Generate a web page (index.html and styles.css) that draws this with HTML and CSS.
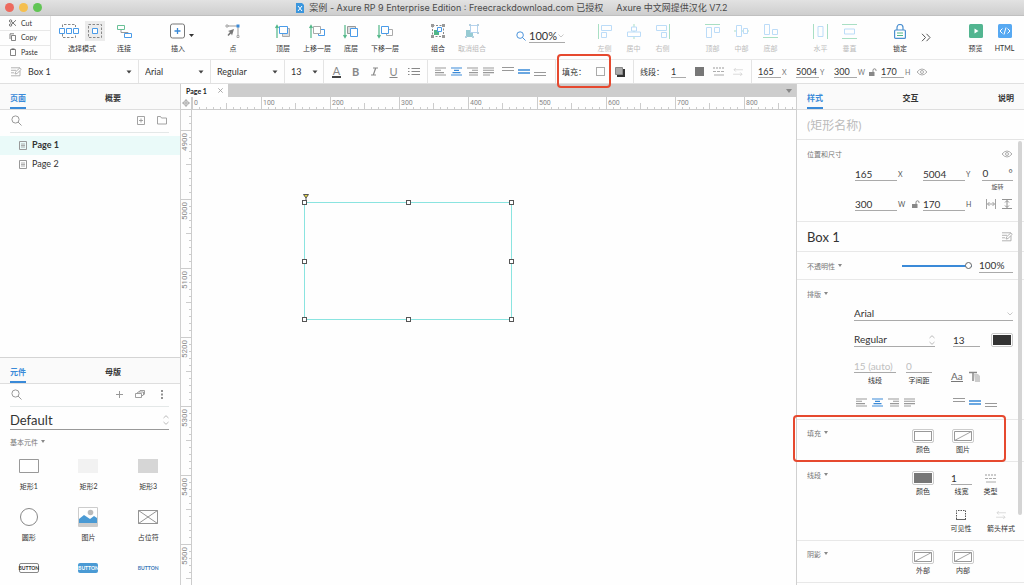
FILE: index.html
```html
<!DOCTYPE html>
<html lang="zh-CN">
<head>
<meta charset="utf-8">
<title>案例 - Axure RP 9</title>
<link rel="stylesheet" href="styles.css">
</head>
<body>
<svg class="defs" aria-hidden="true">
  <symbol id="caret" viewBox="0 0 6 4"><path d="M.5.5h5L3 3.500z" fill="#444"/></symbol>
  <symbol id="chev" viewBox="0 0 6 4"><path d="M.5.5 3 3 5.5.5" fill="none" stroke="#bbb" stroke-width=".8"/></symbol>
  <symbol id="updown" viewBox="0 0 6 10"><path d="M.5 3 3 .7 5.5 3M.5 7 3 9.300 5.500 7" fill="none" stroke="#aaa" stroke-width=".8"/></symbol>
  <symbol id="note" viewBox="0 0 12 10"><path d="M1 .8h9M1 3.300h5M1 5.800h3M1 8.800h9M5 7l.6-2.200L9.800 1l1.400 1.400L7 6.500zM10 4v4.800" fill="none" stroke="#aaa" stroke-width=".9"/></symbol>
  <symbol id="search" viewBox="0 0 11 11"><circle cx="4.500" cy="4.500" r="3.600" fill="none" stroke="currentColor"/><path d="m7 7 3.500 3.500" stroke="currentColor"/></symbol>
  <symbol id="eye" viewBox="0 0 12 8"><path d="M1 4q5-6 10 0-5 6-10 0z" fill="none" stroke="#999" stroke-width=".8"/><circle cx="6" cy="4" r="1.500" fill="none" stroke="#999" stroke-width=".8"/></symbol>
  <symbol id="unlock" viewBox="0 0 8 8"><path d="M0 4h5.500v4H0z" fill="#888"/><path d="M4 4V2.300a1.500 1.500 0 0 1 3 0V3" fill="none" stroke="#888"/></symbol>
  <symbol id="al" viewBox="0 0 11 9"><path d="M0 1h11M0 3.300h6M0 5.600h9M0 8h11" stroke="#999" stroke-width="1.100"/></symbol>
  <symbol id="ac" viewBox="0 0 11 9"><path d="M0 1h11M3 3.300h5M1.500 5.600h8M0 8h11" stroke="#3a8ad8" stroke-width="1.200"/></symbol>
  <symbol id="ar" viewBox="0 0 11 9"><path d="M0 1h11M5 3.300h6M2 5.600h9M2 8h9" stroke="#999" stroke-width="1.100"/></symbol>
  <symbol id="aj" viewBox="0 0 11 9"><path d="M0 1h11M0 3.300h11M0 5.600h11M0 8h7" stroke="#999" stroke-width="1.100"/></symbol>
  <symbol id="vt" viewBox="0 0 12 11"><path d="M0 1.500h12M0 4.500h12" stroke="#999" stroke-width="1.200"/></symbol>
  <symbol id="vm" viewBox="0 0 12 11"><path d="M0 4h12M0 7h12" stroke="#3a8ad8" stroke-width="1.400"/></symbol>
  <symbol id="vb" viewBox="0 0 12 11"><path d="M0 6.500h12M0 9.500h12" stroke="#999" stroke-width="1.200"/></symbol>
  <symbol id="dash" viewBox="0 0 11 9"><path d="M0 1h11" stroke="#999" stroke-dasharray="2 1"/><path d="M0 4.500h11" stroke="#999" stroke-dasharray="3 1" stroke-width=".8"/><path d="M1 8h10" stroke="#aaa"/></symbol>
  <symbol id="arrows" viewBox="0 0 11 9"><path d="M11 2H1M3 0 1 2l2 2M0 7h10M8 5l2 2-2 2" fill="none" stroke="#ccc" stroke-width=".8"/></symbol>
  <symbol id="pageicon" viewBox="0 0 8 9"><path d="M.5.5h7v8h-7z" fill="none" stroke="#999"/><path d="M2 3h4M2 4.500h4M2 6h4" stroke="#999" stroke-width=".8"/></symbol>
  <symbol id="nofill" viewBox="0 0 20 12"><path d="M1.500 1.500h17v9h-17z" fill="#fff" stroke="#999"/><path d="m1.500 10.500 17-9" stroke="#999" stroke-width=".9"/></symbol>
</svg>

<header class="titlebar">
  <span class="light light-red"></span><span class="light light-yellow"></span><span class="light light-green"></span>
  <div class="title">
    <svg width="8" height="10" viewBox="0 0 8 10"><path d="M0 0h6l2 2v8H0z" fill="#3b96dd"/><path d="m2 3 4 5M6 3 2 8" stroke="#fff"/></svg>
    <span>案例 - Axure RP 9 Enterprise Edition : Freecrackdownload.com 已授权</span>
    <span class="title-extra">Axure 中文网提供汉化 V7.2</span>
  </div>
</header>

<div class="toolbar">
  <div class="clipboard">
    <button><svg width="8" height="8" viewBox="0 0 8 8"><g fill="none" stroke="#555" stroke-width=".8"><circle cx="1.600" cy="2" r="1.200"/><circle cx="1.600" cy="6" r="1.200"/><path d="M2.500 2.700 7 6.800M2.500 5.300 7 1.200"/></g></svg>Cut</button>
    <button><svg width="8" height="8" viewBox="0 0 8 8"><path d="M2.500 2.500h4v5h-4zM1 6V.8h4" fill="none" stroke="#666" stroke-width=".8"/></svg>Copy</button>
    <button><svg width="8" height="8" viewBox="0 0 8 8"><path d="M1.500 1.500h5v6h-5z" fill="none" stroke="#666" stroke-width=".8"/><path d="M2.500 1.200h3" stroke="#666" stroke-width="1.500"/></svg>Paste</button>
  </div>
  <button class="tool tool-select"><span class="tool-icon">
    <svg width="20" height="16" viewBox="0 0 20 16"><path d="M3.500 4V1.500h13V4M3.500 11v3.500h13V11" fill="none" stroke="#888" stroke-dasharray="2.500 1.500"/><path d="M.5 5.500h5v5h-5zM7.500 5.500h5v5h-5zM14.500 5.500h5v5h-5z" fill="#fff" stroke="#4a9be8"/></svg>
    <span class="pressed"><svg width="16" height="16" viewBox="0 0 16 16"><path d="M1.500 1.500h13v13h-13z" fill="none" stroke="#888" stroke-dasharray="2.500 1.500"/><path d="M5.500 5.500h5v5h-5z" fill="#fff" stroke="#4a9be8"/></svg></span></span>选择模式</button>
  <button class="tool tool-connect"><span class="tool-icon"><svg width="15" height="15" viewBox="0 0 15 15"><path d="M.5 1.500h7v4h-7z" fill="none" stroke="#68c096"/><path d="M4 6v2.500h7V9" fill="none" stroke="#999"/><path d="M7.500 9.500h7v4h-7z" fill="#fff" stroke="#4a9be8"/></svg></span>连接</button>
  <button class="tool tool-insert"><span class="tool-icon"><svg width="32" height="16" viewBox="0 0 32 16"><rect x="8.500" y="1" width="14" height="14" rx="2" fill="#fff" stroke="#777"/><path d="M15.500 5v6M12.500 8h6" stroke="#3a8ad8" stroke-width="1.300"/><path d="M27 11h5l-2.500 3z" fill="#333"/></svg></span>插入</button>
  <button class="tool tool-point"><span class="tool-icon"><svg width="16" height="16" viewBox="0 0 16 16"><path d="M3 3h10v9" fill="none" stroke="#999"/><path d="M1 2h2v2H1zM12 12.500h2v2h-2z" fill="#fff" stroke="#888" stroke-width=".7"/><path d="M11.500 1.500h3v3h-3z" fill="#3a8ad8"/><path d="m9 6-6 2 2 1-2.500 3 1 1L6 10.500l1 2z" fill="#777"/></svg></span>点</button>
  <div class="tools tools-order">
    <button class="tool"><span class="tool-icon"><svg width="16" height="15" viewBox="0 0 16 15"><path d="M2 14V2M.5 4 2 1.500 3.500 4" fill="none" stroke="#52b788" stroke-width="1.200"/><path d="M7.500 4.500h7v8h-7z" fill="#ddd" stroke="#aaa"/><path d="M4.500 2.500h8v7h-8z" fill="#fff" stroke="#4a9be8"/></svg></span>顶层</button>
    <button class="tool"><span class="tool-icon"><svg width="16" height="15" viewBox="0 0 16 15"><path d="M2 14V2M.5 4 2 1.500 3.500 4" fill="none" stroke="#52b788" stroke-width="1.200"/><path d="M9.500 5.500h6v6h-6z" fill="#fff" stroke="#4a9be8"/><path d="M4.500 2.500h7v7h-7z" fill="#fff" stroke="#aaa"/></svg></span>上移一层</button>
    <button class="tool"><span class="tool-icon"><svg width="16" height="15" viewBox="0 0 16 15"><path d="M2 1v12M.5 11 2 13.500 3.500 11" fill="none" stroke="#52b788" stroke-width="1.200"/><path d="M4.500 2.500h8v7h-8z" fill="#ddd" stroke="#999"/><path d="M7.500 4.500h7v8h-7z" fill="#fff" stroke="#4a9be8"/></svg></span>底层</button>
    <button class="tool"><span class="tool-icon"><svg width="16" height="15" viewBox="0 0 16 15"><path d="M2 1v12M.5 11 2 13.500 3.500 11" fill="none" stroke="#52b788" stroke-width="1.200"/><path d="M9.500 5.500h6v6h-6z" fill="#fff" stroke="#aaa"/><path d="M4.500 2.500h7v7h-7z" fill="#fff" stroke="#4a9be8"/></svg></span>下移一层</button>
  </div>
  <div class="tools tools-group">
    <button class="tool"><span class="tool-icon"><svg width="14" height="14" viewBox="0 0 14 14"><path d="M1.500 1.500h11v11h-11z" fill="none" stroke="#888" stroke-dasharray="2 1.500"/><path d="M0 0h3v3H0zM11 0h3v3h-3zM0 11h3v3H0zM11 11h3v3h-3z" fill="#999"/><path d="M3 6h5v5H3z" fill="#52b788"/><path d="M6.500 3.500h4v4h-4z" fill="#fff" stroke="#4a9be8"/></svg></span>组合</button>
    <button class="tool" disabled><span class="tool-icon"><svg width="14" height="14" viewBox="0 0 14 14"><path d="M1 6h7v7H1z" fill="#97cbd3"/><path d="M5.500 1.500h7v7h-7z" fill="#fff" stroke="#b5d3ef"/><path d="M4 0h2v2H4zM12 0h2v2h-2zM12 8h2v2h-2zM0 12h2v2H0zM7 12h2v2H7z" fill="#b5d0e0"/></svg></span>取消组合</button>
  </div>
  <label class="zoom"><svg width="10" height="10"><use href="#search"/></svg><input value="100%" aria-label="缩放"><svg width="6" height="4"><use href="#chev"/></svg></label>
  <div class="tools tools-narrow tools-align">
    <button class="tool" disabled><span class="tool-icon"><svg width="14" height="15" viewBox="0 0 14 15"><path d="M.5 0v15" stroke="#a9dfc4"/><path d="M3.500 1.500h10v5h-10zM3.500 8.500h5v5h-5z" fill="none" stroke="#bcdcf8"/></svg></span>左侧</button>
    <button class="tool" disabled><span class="tool-icon"><svg width="14" height="15" viewBox="0 0 14 15"><path d="M7 0v15" stroke="#a9dfc4"/><path d="M4.500 3h5v4h-5zM.5 8h13v4.500H.5z" fill="#fff" stroke="#bcdcf8"/></svg></span>居中</button>
    <button class="tool" disabled><span class="tool-icon"><svg width="14" height="15" viewBox="0 0 14 15"><path d="M13.500 0v15" stroke="#a9dfc4"/><path d="M.5 1.500h10v5H.5zM5.500 8.500h5v5h-5z" fill="none" stroke="#bcdcf8"/></svg></span>右侧</button>
  </div>
  <div class="tools tools-narrow">
    <button class="tool" disabled><span class="tool-icon"><svg width="15" height="14" viewBox="0 0 15 14"><path d="M0 .5h15" stroke="#a9dfc4"/><path d="M1.500 3.500h5v10h-5zM9.500 3.500h5v5h-5z" fill="none" stroke="#bcdcf8"/></svg></span>顶部</button>
    <button class="tool" disabled><span class="tool-icon"><svg width="15" height="14" viewBox="0 0 15 14"><path d="M0 7h15" stroke="#a9dfc4"/><path d="M2.500 1.500h5v11h-5zM9.500 4.500h4v5h-4z" fill="#fff" stroke="#bcdcf8"/></svg></span>中部</button>
    <button class="tool" disabled><span class="tool-icon"><svg width="15" height="14" viewBox="0 0 15 14"><path d="M0 13.500h15" stroke="#a9dfc4"/><path d="M1.500.5h5v10h-5zM9.500 5.500h5v5h-5z" fill="none" stroke="#bcdcf8"/></svg></span>底部</button>
  </div>
  <div class="tools tools-narrow">
    <button class="tool" disabled><span class="tool-icon"><svg width="15" height="15" viewBox="0 0 15 15"><path d="M.5 0v15M14.500 0v15" stroke="#a9dfc4"/><path d="M5 2.500h5v10H5z" fill="none" stroke="#bcdcf8"/></svg></span>水平</button>
    <button class="tool" disabled><span class="tool-icon"><svg width="15" height="15" viewBox="0 0 15 15"><path d="M0 .5h15M0 14.500h15" stroke="#a9dfc4"/><path d="M2.500 5h10v5h-10z" fill="none" stroke="#bcdcf8"/></svg></span>垂直</button>
  </div>
  <button class="tool tool-lock"><span class="tool-icon"><svg width="12" height="15" viewBox="0 0 12 15"><path d="M3 6V3.500a3 3 0 0 1 6 0V6" fill="none" stroke="#4a8fd0" stroke-width="1.200"/><rect x=".6" y="6" width="10.800" height="8.400" rx="1" fill="#fff" stroke="#4a8fd0" stroke-width="1.200"/><path d="M3 9h6M3 11.500h6" stroke="#52b788" stroke-width="1.200"/></svg></span>锁定</button>
  <button class="more" aria-label="更多"><svg width="10" height="9" viewBox="0 0 10 9"><path d="m1 .8 3.500 3.700L1 8.200M5.500.8 9 4.500 5.500 8.200" fill="none" stroke="#555"/></svg></button>
  <div class="tools tools-narrow tools-preview">
    <button class="tool"><span class="tool-icon"><svg width="14" height="14" viewBox="0 0 14 14"><rect width="14" height="14" rx="1.500" fill="#52b590"/><path d="M5.500 4.500 9.500 7l-4 2.500z" fill="#fff"/></svg></span>预览</button>
    <button class="tool"><span class="tool-icon"><svg width="14" height="14" viewBox="0 0 14 14"><rect width="14" height="14" rx="1.500" fill="#57a9f2"/><path d="M4.500 4.500 2 7l2.500 2.500M9.500 4.500 12 7 9.500 9.500M8 3.500l-2 7" fill="none" stroke="#fff"/></svg></span>HTML</button>
  </div>
</div>

<div class="formatbar">
  <div class="fgroup pick pick-style"><svg width="12" height="10"><use href="#note"/></svg><select aria-label="样式"><option>Box 1</option></select><svg class="caret" width="6" height="4"><use href="#caret"/></svg></div>
  <div class="fgroup pick pick-font"><select aria-label="字体"><option>Arial</option></select><svg class="caret" width="6" height="4"><use href="#caret"/></svg></div>
  <div class="fgroup pick pick-weight"><select aria-label="字型"><option>Regular</option></select><svg class="caret" width="6" height="4"><use href="#caret"/></svg></div>
  <div class="fgroup pick pick-size"><select aria-label="字号"><option>13</option></select><svg class="caret" width="6" height="4"><use href="#caret"/></svg></div>
  <div class="fgroup text-tools">
    <button class="glyph glyph-color" aria-label="文字颜色">A</button><button class="glyph glyph-bold" aria-label="粗体">B</button><button class="glyph" aria-label="斜体"><svg width="9" height="9" viewBox="0 0 9 9"><path d="M3 1h5M1 8h5M5.700 1 3.300 8" fill="none" stroke="#888" stroke-width="1.200"/></svg></button><button class="glyph glyph-under" aria-label="下划线">U</button>
    <button aria-label="列表"><svg width="12" height="9" viewBox="0 0 12 9"><path d="M0 1.500h1.500M0 4.500h1.500M0 7.500h1.500M3.500 1.500H12M3.500 4.500H12M3.500 7.500H12" stroke="#888"/></svg></button>
  </div>
  <div class="fgroup align-tools">
    <button aria-label="左对齐"><svg width="11" height="9"><use href="#al"/></svg></button><button aria-label="居中对齐"><svg width="11" height="9"><use href="#ac"/></svg></button><button aria-label="右对齐"><svg width="11" height="9"><use href="#ar"/></svg></button><button aria-label="两端对齐"><svg width="11" height="9"><use href="#aj"/></svg></button>
    <span class="valign"><button aria-label="顶端"><svg width="12" height="11"><use href="#vt"/></svg></button><button aria-label="中间"><svg width="12" height="11"><use href="#vm"/></svg></button><button aria-label="底端"><svg width="12" height="11"><use href="#vb"/></svg></button></span>
  </div>
  <div class="fgroup fill-tools">
    <span class="flabel">填充：</span><button class="chip chip-empty" aria-label="填充颜色"></button><button class="shadow-btn" aria-label="阴影"><svg width="10" height="10" viewBox="0 0 10 10"><path d="M2 2h8v8H2z" fill="#333"/><path d="M.5.5h7v7h-7z" fill="#aaa" stroke="#888"/></svg></button>
    <span class="mark mark-bar"></span>
  </div>
  <div class="fgroup line-tools">
    <span class="flabel">线段：</span><input class="line-width" value="1" aria-label="线宽"><button class="chip chip-grey" aria-label="线段颜色"></button><button aria-label="线段类型"><svg width="11" height="9"><use href="#dash"/></svg></button><button aria-label="箭头样式"><svg width="10" height="8"><use href="#arrows"/></svg></button>
  </div>
  <div class="fgroup geometry">
    <label><input value="165">X</label><label><input value="5004">Y</label><label><input value="300">W</label><svg width="8" height="8"><use href="#unlock"/></svg><label><input value="170">H</label><svg width="12" height="8"><use href="#eye"/></svg>
  </div>
</div>

<main class="workspace">
  <aside class="left">
    <section class="panel">
      <nav class="tabs"><a class="active" href="#pages">页面</a><a href="#outline">概要</a></nav>
      <div class="searchbar"><svg width="11" height="11"><use href="#search"/></svg><input type="search" aria-label="搜索页面">
        <button aria-label="添加页面"><svg width="8" height="9" viewBox="0 0 8 9"><path d="M.5.5h7v8h-7zM4 2.500v4M2 4.500h4" fill="none" stroke="#999" stroke-width=".9"/></svg></button>
        <button aria-label="添加文件夹"><svg width="10" height="9" viewBox="0 0 10 9"><path d="M.5.5h3l1 1.500h5v6h-9z" fill="none" stroke="#999" stroke-width=".9"/></svg></button></div>
      <ul class="pages" id="pages">
        <li class="current"><a href="#p1"><svg width="8" height="9"><use href="#pageicon"/></svg>Page 1</a></li>
        <li><a href="#p2"><svg width="8" height="9"><use href="#pageicon"/></svg>Page 2</a></li>
      </ul>
    </section>
    <section class="panel">
      <nav class="tabs"><a class="active" href="#widgets">元件</a><a href="#masters">母版</a></nav>
      <div class="searchbar"><svg width="11" height="11"><use href="#search"/></svg><input type="search" aria-label="搜索元件">
        <button aria-label="添加"><svg width="7" height="7" viewBox="0 0 7 7"><path d="M3.500 0v7M0 3.500h7" stroke="#999"/></svg></button>
        <button aria-label="元件库"><svg width="10" height="8" viewBox="0 0 10 8"><path d="M.5 3.500h6v4h-6zM2 3.500l1-1.500h5.500v3l-2 1M4 2l1-1.500h4.500V4l-1 1" fill="none" stroke="#888" stroke-width=".8"/></svg></button>
        <button aria-label="菜单"><svg width="10" height="9" viewBox="0 0 10 9"><path d="M5 0v2M5 3.500v2M5 7v2" stroke="#777" stroke-width="1.600"/></svg></button></div>
      <div class="library"><select aria-label="元件库"><option>Default</option></select><svg width="6" height="10"><use href="#updown"/></svg></div>
      <h3 class="group-title">基本元件 <i class="tri"></i></h3>
      <div class="widgets" id="widgets">
        <figure><svg width="20" height="20" viewBox="0 0 20 20"><path d="M.5 3.500h19v13H.5z" fill="#fff" stroke="#999"/></svg><figcaption>矩形1</figcaption></figure>
        <figure><svg width="20" height="20" viewBox="0 0 20 20"><path d="M0 3h20v14H0z" fill="#f2f2f2"/></svg><figcaption>矩形2</figcaption></figure>
        <figure><svg width="20" height="20" viewBox="0 0 20 20"><path d="M0 3h20v14H0z" fill="#d6d6d6"/></svg><figcaption>矩形3</figcaption></figure>
        <figure><svg width="20" height="20" viewBox="0 0 20 20"><circle cx="10" cy="10" r="8.500" fill="#fff" stroke="#888"/></svg><figcaption>圆形</figcaption></figure>
        <figure><svg width="20" height="20" viewBox="0 0 20 20"><path d="M.5.500h19v19H.5z" fill="#fff" stroke="#ccc"/><circle cx="12.500" cy="5.500" r="2.800" fill="#bbb"/><path d="m1 12 5-4 6 4 4-3 3 2v5H1z" fill="#4a9ad4"/><path d="M1 16h18v3H1z" fill="#ccc"/></svg><figcaption>图片</figcaption></figure>
        <figure><svg width="20" height="20" viewBox="0 0 20 20"><path d="M.5 3.500h19v13H.5zl19 13M19.500 3.500l-19 13" fill="none" stroke="#888" stroke-width=".9"/></svg><figcaption>占位符</figcaption></figure>
        <figure><span class="sample sample-line">BUTTON</span></figure>
        <figure><span class="sample sample-solid">BUTTON</span></figure>
        <figure><span class="sample sample-link">BUTTON</span></figure>
      </div>
    </section>
  </aside>

  <section class="center">
    <div class="doc-tabs"><a class="doc-tab" href="#p1">Page 1<svg width="5" height="5" viewBox="0 0 5 5"><path d="m.3.300 4.400 4.400M4.700.3.300 4.700" stroke="#999" stroke-width=".8"/></svg></a><svg class="tab-menu" width="6" height="4" viewBox="0 0 6 4"><path d="M0 0h6L3 4z" fill="#888"/></svg></div>
    <div class="ruler-corner"><svg width="8" height="8" viewBox="0 0 8 8"><path d="M4 0v8M0 4h8" stroke="#999" stroke-width=".8"/><circle cx="4" cy="4" r="2.400" fill="none" stroke="#999" stroke-width=".8"/></svg></div>
    <div class="ruler-x">
      <svg class="ticks" width="100%" height="12"><defs><pattern id="tx" width="69" height="12" patternUnits="userSpaceOnUse"><path d="M.5 0v12M34.500 6v6M7.500 10v2M14.500 10v2M21.500 10v2M28.500 10v2M41.500 10v2M48.500 10v2M55.500 10v2M62.500 10v2" stroke="#ccc"/></pattern></defs><rect width="100%" height="12" fill="url(#tx)"/></svg>
      <span>0</span><span>100</span><span>200</span><span>300</span><span>400</span><span>500</span><span>600</span><span>700</span><span>800</span>
    </div>
    <div class="ruler-y">
      <svg class="ticks" width="10" height="100%"><defs><pattern id="ty" y="20" width="10" height="69" patternUnits="userSpaceOnUse"><path d="M0 .5h10M5 34.500h5M8 7.500h2M8 14.500h2M8 21.500h2M8 28.500h2M8 41.500h2M8 48.500h2M8 55.500h2M8 62.500h2" stroke="#ccc"/></pattern></defs><rect width="10" height="100%" fill="url(#ty)"/></svg>
      <span>4900</span><span>5000</span><span>5100</span><span>5200</span><span>5300</span><span>5400</span><span>5500</span>
    </div>
    <div class="canvas">
      <div class="shape">
        <svg class="corner-grip" width="6" height="7" viewBox="0 0 6 7"><path d="M.5.500h5L3 4z" fill="#e8d83c" stroke="#555"/><path d="M3 4v3" stroke="#555"/></svg>
        <i class="handle nw"></i><i class="handle n"></i><i class="handle ne"></i><i class="handle w"></i><i class="handle e"></i><i class="handle sw"></i><i class="handle s"></i><i class="handle se"></i>
      </div>
    </div>
  </section>

  <aside class="right">
    <nav class="tabs tabs-spread"><a class="active" href="#style">样式</a><a href="#interact">交互</a><a href="#notes">说明</a></nav>
    <input class="name" placeholder="(矩形名称)" aria-label="矩形名称">
    <div class="props" id="style">
      <section class="prop">
        <div class="prop-head"><h3>位置和尺寸</h3><svg width="12" height="8"><use href="#eye"/></svg></div>
        <div class="position">
          <label><input value="165">X</label><label><input value="5004">Y</label>
          <label class="rotate"><span class="degree"><input value="0">°</span>旋转</label>
          <span class="size-lock"><label><input value="300">W</label><svg width="8" height="8"><use href="#unlock"/></svg></span><label><input value="170">H</label>
          <span class="fit"><svg width="10" height="10" viewBox="0 0 10 10"><path d="M.5 0v10M9.500 0v10M1.500 5h7M3.500 3l-2 2 2 2M6.500 3l2 2-2 2" fill="none" stroke="#999" stroke-width=".9"/></svg><svg width="10" height="10" viewBox="0 0 10 10"><path d="M0 .5h10M0 9.500h10M5 1.500v7M3 3.500l2-2 2 2M3 6.500l2 2 2-2" fill="none" stroke="#888" stroke-width=".9"/></svg></span>
        </div>
      </section>
      <section class="prop shape-name"><h2>Box 1</h2><svg width="12" height="10"><use href="#note"/></svg></section>
      <section class="prop opacity"><h3>不透明性 <i class="tri"></i></h3><input type="range" value="100" aria-label="不透明性"><input class="percent" value="100%" aria-label="不透明性数值"></section>
      <section class="prop type">
        <div class="prop-head"><h3>排版 <i class="tri"></i></h3></div>
        <div class="type-body">
          <div class="picker picker-font"><select aria-label="字体"><option>Arial</option></select><svg width="6" height="4"><use href="#chev"/></svg></div>
          <div class="type-row"><div class="picker picker-weight"><select aria-label="字型"><option>Regular</option></select><svg width="6" height="10"><use href="#updown"/></svg></div><input class="font-size" value="13" aria-label="字号"><button class="swatch swatch-dark" aria-label="文字颜色"></button></div>
          <div class="type-row"><label class="stack leading"><input placeholder="15 (auto)">线段</label><label class="stack tracking"><input placeholder="0">字间距</label>
            <span class="case"><button class="aa" aria-label="大小写">Aa</button><button aria-label="文字阴影"><svg width="11" height="11" viewBox="0 0 11 11"><path d="M5 3h4l2 2v6H6z" fill="#ccc"/><path d="M0 1.500h8M4 1.500V10" stroke="#888" stroke-width="1.500"/></svg></button></span></div>
          <div class="type-aligns"><button aria-label="左对齐"><svg width="11" height="9"><use href="#al"/></svg></button><button aria-label="居中对齐"><svg width="11" height="9"><use href="#ac"/></svg></button><button aria-label="右对齐"><svg width="11" height="9"><use href="#ar"/></svg></button><button aria-label="两端对齐"><svg width="11" height="9"><use href="#aj"/></svg></button>
            <span class="valign"><button aria-label="顶端"><svg width="12" height="11"><use href="#vt"/></svg></button><button aria-label="中间"><svg width="12" height="11"><use href="#vm"/></svg></button><button aria-label="底端"><svg width="12" height="11"><use href="#vb"/></svg></button></span></div>
        </div>
      </section>
      <section class="prop options">
        <h3>填充 <i class="tri"></i></h3>
        <div class="cells"><label class="cell"><button class="swatch swatch-empty"></button>颜色</label><label class="cell"><button class="swatch"><svg width="20" height="12"><use href="#nofill"/></svg></button>图片</label></div>
        <span class="mark mark-fill"></span>
      </section>
      <section class="prop options options-line">
        <h3>线段 <i class="tri"></i></h3>
        <div>
          <div class="cells"><label class="cell"><button class="swatch swatch-grey"></button>颜色</label><label class="cell cell-width"><input value="1">线宽</label><label class="cell cell-kind"><button><svg width="11" height="9"><use href="#dash"/></svg></button>类型</label></div>
          <div class="cells cells-second"><label class="cell"><button><svg width="10" height="10" viewBox="0 0 10 10"><path d="M.5 9V.5h9V9" fill="none" stroke="#555" stroke-dasharray="1.500 1"/><path d="M0 9.500h10" stroke="#666"/></svg></button>可见性</label><label class="cell"><button><svg width="10" height="8"><use href="#arrows"/></svg></button>箭头样式</label></div>
        </div>
      </section>
      <section class="prop options">
        <h3>阴影 <i class="tri"></i></h3>
        <div class="cells"><label class="cell"><button class="swatch"><svg width="20" height="12"><use href="#nofill"/></svg></button>外部</label><label class="cell"><button class="swatch"><svg width="20" height="12"><use href="#nofill"/></svg></button>内部</label></div>
      </section>
      <span class="scrollbar"></span>
    </div>
  </aside>
</main>
</body>
</html>
```
FILE: styles.css
```css
* { box-sizing: border-box; }
body {
  margin: 0;
  height: 100vh;
  display: flex;
  flex-direction: column;
  overflow: hidden;
  background: #fefefe;
  color: #333;
  font: 8px/10px Lato, "Noto Sans CJK SC", sans-serif;
}
button, input, select {
  appearance: none;
  margin: 0;
  padding: 0;
  border: 0;
  border-radius: 0;
  background: none;
  color: inherit;
  font: inherit;
  outline: 0;
}
input { min-width: 0; }
a { color: inherit; text-decoration: none; }
h2, h3, figure, ul { margin: 0; padding: 0; font-weight: 400; list-style: none; }
svg { display: block; flex: none; }
.defs { position: absolute; width: 0; height: 0; }

.titlebar {
  flex: none;
  display: flex;
  align-items: center;
  gap: 5px;
  height: 16px;
  padding: 0 5px;
  background: linear-gradient(#e2e2e2, #cecece);
  border-bottom: 1px solid #c0c0c0;
}
.light { width: 9px; height: 9px; border-radius: 50%; }
.light-red { background: #ed6a5e; }
.light-yellow { background: #f5bf4f; }
.light-green { background: #61c554; }
.title {
  flex: 1;
  display: flex;
  justify-content: center;
  align-items: center;
  gap: 5px;
  padding-right: 42px;
  color: #4a4a4a;
  font: 9px/12px Inter, "Noto Sans CJK SC", sans-serif;
  white-space: nowrap;
}
.title-extra { padding-left: 8px; }

.toolbar {
  flex: none;
  display: flex;
  height: 44px;
  border-bottom: 1px solid #e8e8e8;
  font-size: 7px;
}
.clipboard {
  display: grid;
  grid-template-rows: repeat(3, 1fr);
  width: 51px;
  border-right: 1px solid #e4e4e4;
}
.clipboard button { display: flex; align-items: center; gap: 4px; padding: 0 0 1px 9px; }
.clipboard button + button { border-top: 1px solid #e8e8e8; }
.tools { display: flex; }
.tool {
  display: flex;
  flex-direction: column;
  align-items: center;
  width: 34px;
  padding-top: 5px;
  white-space: nowrap;
}
.tool:disabled { color: #bbb; }
.tool-icon { display: flex; align-items: center; gap: 6px; height: 20px; margin-bottom: 2px; }
.pressed { padding: 2px; background: #ececec; }
.tools-narrow .tool { width: 29px; }
.tool-select { width: 58px; margin-left: 2px; }
.tool-connect { width: 26px; }
.tool-insert { margin-left: 24px; }
.tool-point { margin-left: 21px; }
.tools-order { margin-left: 16px; }
.tools-group { margin-left: 19px; }
.zoom { align-self: center; display: flex; align-items: center; margin: 0 0 4px 27px; width: 49px; color: #3a8ad8; }
.zoom input { width: 36px; height: 14px; margin: 0 -7px 0 3px; border-bottom: 1px solid #aaa; color: #333; font-size: 11px; line-height: 13px; }
.tools-narrow { margin-left: 21px; }
.tools-align { margin-left: 25px; }
.tool-lock { margin-left: 19px; }
.more { align-self: center; margin: 0 0 0 4px; }
.tools-preview { margin-left: auto; padding-right: 5px; }

.formatbar { flex: none; display: flex; height: 24px; border-bottom: 1px solid #e0e0e0; }
.fgroup { display: flex; align-items: center; border-right: 1px solid #e4e4e4; }
.pick { gap: 6px; padding: 0 6px; }
.pick select { flex: 1; min-width: 0; font-size: 9px; line-height: 12px; }
.pick-style { width: 139px; padding-left: 10px; }
.pick-font { width: 72px; }
.pick-weight { width: 74px; }
.pick-size { width: 39px; padding-right: 5px; }
.text-tools { width: 104px; padding: 0 7px 0 8px; justify-content: space-between; color: #888; }
.glyph { width: 9px; font-size: 11px; line-height: 11px; }
.glyph-color { border-bottom: 2px solid #444; }
.glyph-bold { font-weight: 700; }
.glyph-under { text-decoration: underline; }
.align-tools { gap: 5px; padding: 0 9px 0 7px; }
.valign { display: flex; gap: 4px; margin-left: 3px; }
.flabel { white-space: nowrap; width: 24px; }
.fill-tools { position: relative; width: 78px; padding-left: 6px; }
.chip { width: 9px; height: 9px; }
.chip-empty { margin-left: 10px; border: 1px solid #aaa; }
.chip-grey { background: #777; }
.shadow-btn { margin-left: 10px; }
.line-tools { width: 118px; padding-left: 6px; gap: 9px; }
.line-width { width: 15px; height: 13px; margin-left: -2px; border-bottom: 1px solid #aaa; font-size: 9px; line-height: 12px; }
.geometry { flex: 1; gap: 4px; padding-left: 6px; border: 0; color: #777; }
.geometry label { display: flex; align-items: center; gap: 1px; width: 31px; font-size: 7px; }
.geometry label:nth-child(-n+2) { margin-right: 3px; }
.geometry input { width: 23px; height: 13px; border-bottom: 1px solid #aaa; color: #333; font-size: 9px; line-height: 12px; }
.mark { position: absolute; border: 2px solid #e6492f; border-radius: 4px; pointer-events: none; z-index: 3; }
.mark-bar { left: 1px; top: -6px; width: 54px; height: 34px; }
.mark-fill { left: -4px; right: 18px; top: -5px; height: 47px; }

.workspace { flex: 1; min-height: 0; display: grid; grid-template: minmax(0, 1fr) / 181px minmax(0, 1fr) 228px; }
.left { display: grid; grid-template-rows: minmax(0, 6fr) minmax(0, 5fr); border-right: 1px solid #d0d0d0; }
.panel { overflow: hidden; }
.panel + .panel { border-top: 1px solid #d4d4d4; }
.tabs {
  display: flex;
  gap: 79px;
  height: 26px;
  padding: 0 10px;
  background: #fafafa;
  border-bottom: 1px solid #dedede;
  font-size: 8px;
  font-weight: 700;
}
.tabs a { height: 25px; padding: 9px 0 4px; border-bottom: 2px solid transparent; white-space: nowrap; }
.tabs .active { color: #3a8ad8; border-color: #3a8ad8; }
.tabs-spread { justify-content: space-between; }
.searchbar { display: flex; align-items: center; gap: 12px; height: 23px; margin: 0 11px 0 10px; padding: 0 2px 2px 1px; border-bottom: 1px solid #e4e8e8; color: #999; }
.searchbar input { flex: 1; }
.pages { padding-top: 3px; font-size: 9px; line-height: 18px; }
.pages a { display: flex; align-items: center; gap: 5px; padding: 0 0 1px 19px; }
.current { background: #eafaf9; font-weight: 700; }
.library { display: flex; align-items: center; margin: 0 11px 0 10px; padding-top: 4px; border-bottom: 1px solid #999; }
.library select { flex: 1; height: 18px; font-size: 13px; line-height: 18px; }
.group-title { padding: 7px 10px 0; }
h3 { color: #777; font-size: 7px; line-height: 10px; white-space: nowrap; }
.tri { display: inline-block; margin-left: 1px; border: 2px solid transparent; border-top: 3px solid #888; border-bottom: 0; vertical-align: 2px; }
.widgets { display: grid; grid-template-columns: repeat(3, 1fr); padding-top: 8px; margin: 0 2px 0 -1px; row-gap: 11px; font-size: 7px; }
.widgets figure { display: flex; flex-direction: column; align-items: center; gap: 5px; height: 40px; padding-top: 1px; }
.widgets figcaption { line-height: 10px; }
.sample { display: flex; justify-content: center; width: 20px; height: 10px; margin-top: 5px; border: 1px solid transparent; border-radius: 2px; font-size: 5px; font-weight: 700; line-height: 8px; }
.sample-line { border-color: #888; }
.sample-solid { background: #4a9ad4; color: #fff; }
.sample-link { color: #3a78b8; }

.center { display: grid; grid-template: 13px 13px minmax(0, 1fr) / 11px minmax(0, 1fr); }
.doc-tabs { grid-column: 1 / -1; display: flex; align-items: center; justify-content: space-between; padding-right: 4px; background: #cdcdcd; }
.doc-tab { display: flex; align-items: center; gap: 11px; height: 13px; padding: 0 5px; background: #fff; color: #222; font-size: 7px; font-weight: 700; }
.ruler-corner { display: flex; align-items: center; justify-content: center; border-right: 1px solid #ccc; border-bottom: 1px solid #ccc; }
.ruler-x, .ruler-y { position: relative; display: flex; overflow: hidden; color: #888; font: 7px/8px Roboto, sans-serif; }
.ruler-x { border-bottom: 1px solid #ccc; }
.ruler-x span { flex: none; width: 69px; padding: 2px 0 0 2px; }
.ticks { position: absolute; left: 0; top: 0; }
.ruler-y { flex-direction: column; padding-top: 20px; border-right: 1px solid #ccc; font-size: 8px; }
.ruler-y span { flex: none; height: 69px; width: 9px; padding-bottom: 3px; writing-mode: vertical-rl; transform: rotate(180deg); text-align: right; }
.canvas { position: relative; overflow: hidden; }
.shape { position: absolute; left: 112px; top: 92px; width: 208px; height: 118px; border: 1px solid #8ae4e0; }
.handle { position: absolute; width: 5px; height: 5px; border: 1px solid #555; background: #fff; }
.nw, .n, .ne { top: -3px; }
.sw, .s, .se { bottom: -3px; }
.nw, .w, .sw { left: -3px; }
.ne, .e, .se { right: -3px; }
.n, .s { left: calc(50% - 2px); }
.w, .e { top: calc(50% - 2px); }
.corner-grip { position: absolute; left: -2px; top: -9px; }

.right { display: flex; flex-direction: column; min-height: 0; border-left: 1px solid #d0d0d0; }
.right .tabs { flex: none; }
.name { flex: none; height: 30px; padding: 2px 10px 0; border-bottom: 1px solid #e4e4e4; font-size: 12px; }
.name::placeholder { color: #bbb; }
.props { position: relative; flex: 1; min-height: 0; }
.scrollbar { position: absolute; right: 2px; top: 1px; width: 4px; height: 84%; border-radius: 2px; background: #d4d4d4; }
.prop { padding: 0 11px 0 10px; border-bottom: 1px solid #e8e8e8; }
.prop-head { display: flex; align-items: center; justify-content: space-between; height: 27px; }
.prop input, .prop select { color: #333; font-size: 10px; line-height: 13px; }
.prop input:not([type="range"]) { height: 14px; border-bottom: 1px solid #aaa; }
.prop input::placeholder { color: #c0c0c0; }
.position { display: grid; grid-template: 30px 14px / 68px 59px 31px; padding-bottom: 10px; margin-left: 48px; color: #555; font-size: 7px; }
.position label { display: flex; align-items: center; gap: 1px; height: 14px; }
.position input { width: 42px; }
.position .rotate { flex-direction: column; height: 25px; font-size: 6px; }
.degree { position: relative; display: flex; border-bottom: 1px solid #aaa; font-size: 10px; line-height: 13px; }
.degree input:not([type="range"]) { width: 26px; height: 13px; border: 0; }
.size-lock, .fit { display: flex; align-items: center; gap: 7px; }
.fit { padding-left: 4px; gap: 6px; }
.shape-name { display: flex; align-items: center; justify-content: space-between; height: 30px; }
.shape-name h2 { font-size: 13px; line-height: 18px; }
.opacity { display: flex; align-items: center; height: 28px; }
.opacity h3 { flex: 1; }
.opacity input[type="range"] { width: 70px; height: 8px; }
.opacity input[type="range"]::-webkit-slider-runnable-track { height: 2px; background: #3a8ad8; }
.opacity input[type="range"]::-webkit-slider-thumb { appearance: none; width: 7px; height: 7px; margin-top: -3px; border: 1px solid #666; border-radius: 50%; background: #fff; }
.opacity .percent { width: 34px; margin-left: 7px; }
.type-body { display: flex; flex-direction: column; gap: 12px; margin-left: 47px; padding-bottom: 11px; }
.picker { display: flex; align-items: center; height: 14px; border-bottom: 1px solid #aaa; }
.picker select { flex: 1; height: 13px; }
.type-row { display: flex; align-items: flex-start; }
.picker-weight { width: 81px; }
.font-size { width: 27px; margin-left: 18px; }
.stack { display: flex; flex-direction: column; align-items: center; font-size: 7px; line-height: 10px; height: 26px; gap: 2px; }
.stack input { width: 100%; }
.leading { width: 42px; }
.tracking { width: 26px; margin-left: 10px; }
.case { display: flex; align-items: center; gap: 6px; margin: 12px 0 0 19px; }
.aa { border-bottom: 1px solid #777; color: #666; font-size: 10px; line-height: 10px; }
.type-aligns { display: flex; align-items: center; gap: 5px; padding-left: 2px; }
.type-aligns .valign { margin-left: 33px; }
.options { position: relative; display: flex; justify-content: space-between; min-height: 42px; padding: 8px 0 0 10px; }
.cells { display: flex; width: 121px; }
.cell { display: flex; flex-direction: column; align-items: center; width: 40px; padding-top: 1px; font-size: 7px; line-height: 10px; white-space: nowrap; gap: 1px; }
.cell button { display: flex; align-items: center; justify-content: center; }
.cell button:not(.swatch) { height: 14px; }
.swatch { width: 22px; height: 14px; margin-left: auto; border: 1px solid #ccc; border-radius: 2px; background: #fff; }
.cell .swatch { margin: 0; }
.swatch-empty { box-shadow: inset 0 0 0 1px #fff, inset 0 0 0 2px #999; }
.swatch-dark { background: #333 content-box; padding: 1px; }
.cell .swatch-grey { background: #777 content-box; padding: 1px; }
.options-line { min-height: 79px; }
.cell-width { width: 37px; }
.cell-width input { width: 21px; }
.cell-kind { width: 21px; }
.cells-second { padding: 11px 0 0 38px; }
```
